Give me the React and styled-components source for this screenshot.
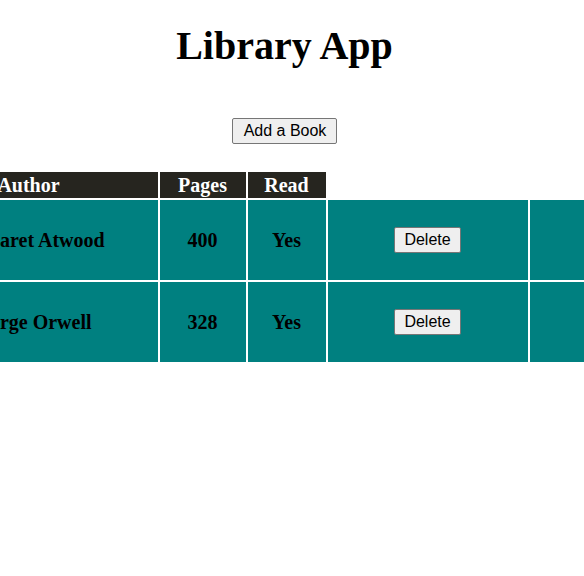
import React from 'react';
import styled, { createGlobalStyle } from 'styled-components';

const GlobalStyle = createGlobalStyle`
	html, body {
		margin: 0;
		overflow: hidden;
		background-color: #ffffff;
		font-family: "Liberation Serif", "Times New Roman", serif;
	}
`;

export const Page = styled.div`
	width: 569px;
	display: flex;
	flex-direction: column;
	align-items: center;
	padding-top: 24px;
`;

export const Title = styled.h1`
	margin: 0;
	font-size: 40px;
	line-height: 44px;
	font-weight: bold;
	color: #000000;
`;

export const Button = styled.button`
	font-family: "Liberation Sans", Arial, sans-serif;
	font-size: 16px;
	line-height: 18px;
	padding: 3px 9px;
	border: 1px solid #767676;
	border-radius: 2px;
	background-color: #efefef;
	color: #000000;
`;

export const AddButton = styled(Button)`
	margin-top: 50px;
	padding: 3px 10px 3px 11px;
`;

export const TableWrap = styled.div`
	width: 100%;
	display: flex;
	justify-content: center;
	margin-top: 26px;
`;

export const Table = styled.table`
	flex-shrink: 0;
	width: 1178px;
	table-layout: fixed;
	border-collapse: separate;
	border-spacing: 2px;
`;

export const HeadCell = styled.th`
	height: 26px;
	padding: 0;
	font-size: 20px;
	font-weight: bold;
	color: #ffffff;
	background-color: #26251f;
	text-align: center;
	vertical-align: middle;
`;

export const Cell = styled.td`
	height: 80px;
	padding: 0;
	font-size: 20px;
	font-weight: bold;
	color: #000000;
	background-color: #008080;
	text-align: center;
	vertical-align: middle;
`;

const widths = [200, 258, 86, 78, 200, 342];

const books = [
	{ id: 1, title: "The Handmaid's Tale", author: 'Margaret Atwood', pages: 400, read: 'Yes' },
	{ id: 2, title: '1984', author: 'George Orwell', pages: 328, read: 'Yes' },
];

const App = () => {
	return (
		<>
			<GlobalStyle />
			<Page>
				<Title>Library App</Title>
				<AddButton>Add a Book</AddButton>
				<TableWrap>
					<Table>
						<colgroup>
							{widths.map((w, i) => (
								<col key={i} style={{ width: w }} />
							))}
						</colgroup>
						<thead>
							<tr>
								<HeadCell>Title</HeadCell>
								<HeadCell>Author</HeadCell>
								<HeadCell>Pages</HeadCell>
								<HeadCell>Read</HeadCell>
							</tr>
						</thead>
						<tbody>
							{books.map(book => (
								<tr key={book.id}>
									<Cell>{book.title}</Cell>
									<Cell>{book.author}</Cell>
									<Cell>{book.pages}</Cell>
									<Cell>{book.read}</Cell>
									<Cell>
										<Button>Delete</Button>
									</Cell>
									<Cell>
										<Button>Change Read Status</Button>
									</Cell>
								</tr>
							))}
						</tbody>
					</Table>
				</TableWrap>
			</Page>
		</>
	);
};

export default App;
